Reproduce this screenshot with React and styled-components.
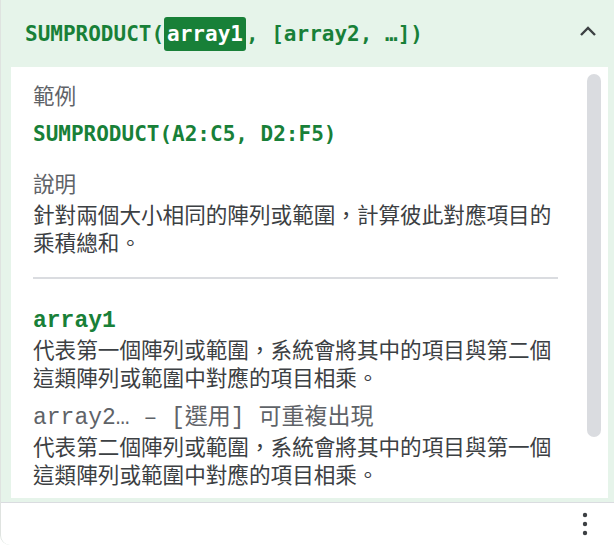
import React from 'react'
import styled, { createGlobalStyle } from 'styled-components'

const GlobalStyle = createGlobalStyle`
  html, body {
    margin: 0;
    padding: 0;
    background: #ffffff;
  }
`

const MONO = `"DejaVu Sans Mono", "Noto Sans CJK TC", monospace`
const COURIER = `"Liberation Mono", "Noto Sans CJK TC", monospace`
const CJK = `"Noto Sans CJK TC", "Noto Sans", sans-serif`

function App() {
  return (
    <>
      <GlobalStyle />
      <Card>
        <Header>
          <Signature>
            SUMPRODUCT(<Active>array1</Active>, [array2, …])
          </Signature>
          <IconButton aria-label="collapse">
            <svg width="18" height="12" viewBox="0 0 18 12">
              <path d="M2 10 L9 3 L16 10" fill="none" stroke="#3c4043" strokeWidth="2.4" />
            </svg>
          </IconButton>
        </Header>

        <Panel>
          <Section $gap={0} $inner={11}>
            <Label>範例</Label>
            <Formula>SUMPRODUCT(A2:C5, D2:F5)</Formula>
          </Section>
          <Section $gap={21} $inner={3}>
            <Label>說明</Label>
            <Body>針對兩個大小相同的陣列或範圍，計算彼此對應項目的乘積總和。</Body>
          </Section>
          <Divider />
          <Section $gap={28} $inner={0}>
            <ArgName $primary>array1</ArgName>
            <Body>代表第一個陣列或範圍，系統會將其中的項目與第二個這類陣列或範圍中對應的項目相乘。</Body>
          </Section>
          <Section $gap={13} $inner={0}>
            <ArgName>array2… – [選用] 可重複出現</ArgName>
            <Body>代表第二個陣列或範圍，系統會將其中的項目與第一個這類陣列或範圍中對應的項目相乘。</Body>
          </Section>
          <ScrollThumb />
        </Panel>

        <Footer>
          <MoreButton aria-label="more">
            <svg width="6" height="24" viewBox="0 0 6 24">
              <circle cx="3" cy="3" r="2.2" fill="#3c4043" />
              <circle cx="3" cy="12" r="2.2" fill="#3c4043" />
              <circle cx="3" cy="21" r="2.2" fill="#3c4043" />
            </svg>
          </MoreButton>
        </Footer>
      </Card>
    </>
  )
}

const Card = styled.div`
  width: 614px;
  height: 545px;
  box-sizing: border-box;
  display: flex;
  flex-direction: column;
  background: #e6f4ea;
  border-left: 1px solid #dfe3e0;
  border-bottom-left-radius: 10px;
  overflow: hidden;
`

const Header = styled.div`
  height: 66px;
  flex-shrink: 0;
  display: flex;
  align-items: center;
  justify-content: space-between;
  padding: 0 14px 0 24px;
  box-sizing: border-box;
`

const Signature = styled.div`
  font-family: ${MONO};
  font-weight: bold;
  font-size: 21px;
  color: #188038;
  white-space: pre;
  display: flex;
  align-items: center;
  margin-top: 1px;
`

const Active = styled.span`
  background: #188038;
  color: #ffffff;
  border-radius: 3px;
  padding: 4px 3px;
  line-height: 26px;
`

const IconButton = styled.div`
  width: 24px;
  height: 24px;
  display: flex;
  align-items: center;
  justify-content: center;
  margin-top: -4px;
`

const Panel = styled.div`
  position: relative;
  height: 431px;
  flex-shrink: 0;
  margin: 1px 6px 0 10px;
  padding: 14px 50px 0 22px;
  box-sizing: border-box;
  background: #ffffff;
  overflow: hidden;
`

const Section = styled.div`
  display: flex;
  flex-direction: column;
  gap: ${p => p.$inner}px;
  margin-top: ${p => p.$gap}px;
`

const Label = styled.div`
  font-family: ${CJK};
  font-size: 21.6px;
  line-height: 28px;
  color: #5f6368;
`

const Formula = styled.div`
  font-family: ${MONO};
  font-weight: bold;
  font-size: 21px;
  line-height: 28px;
  color: #188038;
`

const Body = styled.div`
  font-family: ${CJK};
  font-size: 21.6px;
  line-height: 28px;
  color: #3c4043;
`

const Divider = styled.div`
  height: 2px;
  background: #dadce0;
  margin-top: 21px;
`

const ArgName = styled.div`
  font-family: ${COURIER};
  font-size: 23px;
  line-height: 28px;
  font-weight: ${p => (p.$primary ? 'bold' : 'normal')};
  color: ${p => (p.$primary ? '#188038' : '#5f6368')};
  white-space: pre;
`

const ScrollThumb = styled.div`
  position: absolute;
  top: 7px;
  right: 7px;
  width: 14px;
  height: 363px;
  border-radius: 7px;
  background: #dadce0;
`

const Footer = styled.div`
  flex: 1;
  margin-top: 4px;
  background: #ffffff;
  border-top: 1px solid #dadce0;
  display: flex;
  justify-content: flex-end;
  align-items: center;
  padding-right: 26px;
`

const MoreButton = styled.div`
  display: flex;
  align-items: center;
  justify-content: center;
`

export default App
